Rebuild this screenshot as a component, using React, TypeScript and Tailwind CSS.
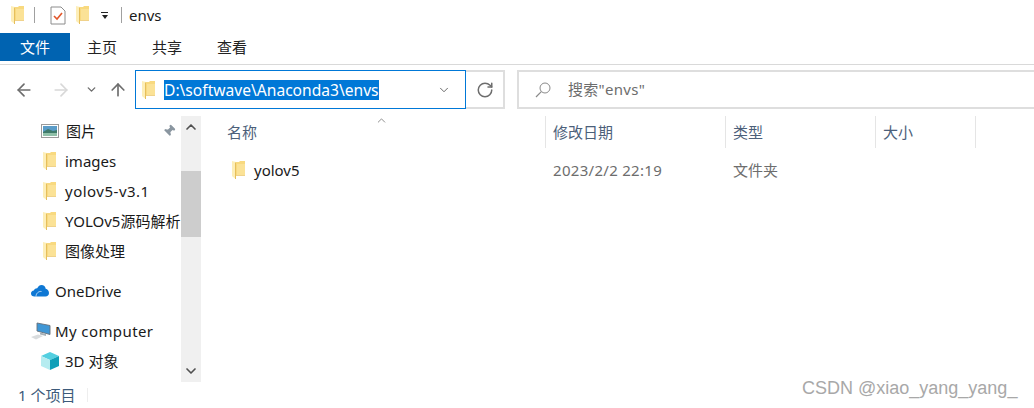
import React from 'react'
import { ArrowLeft, ArrowRight, ArrowUp, ChevronDown, ChevronUp, RotateCw, Pin } from 'lucide-react'

const font = 'font-["Noto_Sans","Noto_Sans_CJK_SC",sans-serif]'

function Folder({ className = '' }: { className?: string }) {
  return (
    <svg width="13" height="18" viewBox="0 0 13 18" className={`shrink-0 ${className}`}>
      <path d="M4 1h3l1-1h5v14H4z" fill="#f8d97f" />
      <path d="M5 3h8v11H5z" fill="#fbe296" />
      <path d="M0 0l4 1v17l-3-2-1-1z" fill="#fdeeb8" />
      <path d="M3 1.500h1V18H3z" fill="#e6bf5c" />
      <path d="M4 14h9v.8H4z" fill="#ecc76e" />
    </svg>
  )
}

function NavRow({ label, indent = 'pl-[43px]', gap = 'gap-[9px]', icon, h = 'h-[30px]', right, labelClass = '' }: {
  label: string
  indent?: string
  gap?: string
  icon: React.ReactNode
  h?: string
  right?: React.ReactNode
  labelClass?: string
}) {
  return (
    <div className={`${h} flex items-center ${indent} ${gap} relative overflow-hidden whitespace-nowrap text-[15px] text-[#1a1a1a]`}>
      {icon}
      <span className={labelClass}>{label}</span>
      {right}
    </div>
  )
}

function PicturesIcon() {
  return (
    <svg width="18" height="14" viewBox="0 0 18 14" className="shrink-0 -ml-[2px] mr-[-2px]">
      <rect x="0.5" y="0.5" width="17" height="13" fill="#fff" stroke="#9a9a9a" />
      <rect x="2" y="2" width="14" height="6" fill="#5a9cc8" />
      <rect x="2" y="8" width="14" height="4" fill="#8fc0a8" />
      <path d="M2 8 7 5l5 2 4-1v3H2z" fill="#3f7a6a" />
    </svg>
  )
}

function CloudIcon() {
  return (
    <svg width="18" height="12" viewBox="0 0 18 12" className="shrink-0">
      <path d="M3.500 11.500C1.300 11.500 0 10.200 0 8.500 0 6.900 1.200 5.700 2.800 5.600 3.500 3.800 5 3.200 6.200 3.300 7.200 1.200 8.800 0 10.500 0c2.200 0 4 1.600 4.200 3.800C16.600 4.200 18 6 18 8s-1.500 3.500-3.500 3.500z" fill="#0f78d4" />
      <path d="M5 11.500c0-3 2.500-5.500 5.500-5" fill="none" stroke="#fff" strokeWidth="0.700" />
    </svg>
  )
}

function ComputerIcon() {
  return (
    <svg width="20" height="18" viewBox="0 0 20 18" className="shrink-0">
      <path d="M6 1l13 2.500v9L6 9z" fill="#3f97d6" stroke="#66717a" strokeWidth="0.900" />
      <path d="M9 10.500l6 1.500v2l-6-1.500z" fill="#a7b1b8" />
      <path d="M0 15l7-2.500 5 1.500-7 3.500z" fill="#d9dcde" />
    </svg>
  )
}

function CubeIcon() {
  return (
    <svg width="18" height="18" viewBox="0 0 18 18" className="shrink-0">
      <path d="M9 0l9 4-9 4-9-4z" fill="#53cfe0" />
      <path d="M0 4l9 4v10l-9-4z" fill="#b5ecf0" />
      <path d="M18 4 9 8v10l9-4z" fill="#0f9fb8" />
    </svg>
  )
}

function MagnifierIcon() {
  return (
    <svg width="16" height="16" viewBox="0 0 16 16" className="shrink-0">
      <circle cx="10" cy="6" r="5" fill="none" stroke="#8a8a8a" strokeWidth="1" />
      <path d="M6.300 9.700 1 15" stroke="#8a8a8a" strokeWidth="1.200" />
    </svg>
  )
}

export default function App() {
  return (
    <div className={`relative w-[1034px] h-[408px] overflow-hidden bg-white flex flex-col ${font}`}>
      {/* title bar */}
      <div className="h-[33px] flex items-center pl-[11px] pb-[3px] shrink-0">
        <Folder />
        <div className="w-px h-[16px] bg-[#a0a0a0] ml-[10px]" />
        <svg width="16" height="19" viewBox="0 0 16 19" className="ml-[15px]">
          <path d="M1 1h10l4 4v13H1z" fill="#fff" stroke="#8c8c8c" />
          <path d="M4 10l3 3 5-6" fill="none" stroke="#e2572b" strokeWidth="1.600" />
        </svg>
        <Folder className="ml-[10px]" />
        <div className="ml-[12px] flex flex-col items-center gap-[2px]">
          <div className="w-[7px] h-px bg-[#222]" />
          <div className="w-0 h-0 border-x-[3.500px] border-x-transparent border-t-[4px] border-t-[#222]" />
        </div>
        <div className="w-px h-[16px] bg-[#a0a0a0] ml-[13px]" />
        <span className="ml-[7px] text-[15px] text-[#1a1a1a]">envs</span>
      </div>

      {/* ribbon tabs */}
      <div className="h-[28px] flex items-center shrink-0 text-[15px] text-[#222]">
        <div className="w-[70px] h-full bg-[#0063b1] text-white flex items-center justify-center">文件</div>
        <span className="ml-[17px]">主页</span>
        <span className="ml-[35px]">共享</span>
        <span className="ml-[35px]">查看</span>
      </div>
      <div className="h-[3px] shrink-0" />
      <div className="h-px bg-[#d9d9d9] shrink-0" />

      {/* address row */}
      <div className="h-[39px] mt-[5px] flex items-stretch shrink-0">
        <div className="w-[135px] flex items-center pl-[14px] text-[#6d6d6d]">
          <ArrowLeft size={20} strokeWidth={2} />
          <ArrowRight size={20} strokeWidth={2} className="ml-[17px] text-[#d8d8d8]" />
          <ChevronDown size={13} strokeWidth={2.500} className="ml-[14px]" />
          <ArrowUp size={20} strokeWidth={2} className="ml-[10px]" />
        </div>
        <div className="w-[331px] border border-[#0078d7] flex items-center pl-[6px] pr-[14px]">
          <Folder />
          <span className="ml-[9px] bg-[#0078d7] text-white text-[15.600px] leading-[20px] whitespace-nowrap">D:\softwave\Anaconda3\envs</span>
          <ChevronDown size={14} strokeWidth={1.500} className="ml-auto text-[#555]" />
        </div>
        <div className="w-[39px] border-y-2 border-r-2 border-[#dedede] flex items-center justify-center">
          <RotateCw size={18} strokeWidth={2} className="text-[#6d6d6d]" />
        </div>
        <div className="ml-[12px] flex-1 border-2 border-r-0 border-[#dedede] flex items-center pl-[16px]">
          <MagnifierIcon />
          <span className="ml-[17px] text-[15px] tracking-[0.300px] text-[#6d6d6d]">搜索"envs"</span>
        </div>
      </div>

      {/* main */}
      <div className="flex-1 min-h-0 flex pt-[7px]">
        <div className="w-[181px] shrink-0 overflow-hidden">
          <NavRow
            label="图片"
            icon={<PicturesIcon />}
            right={<Pin size={14} strokeWidth={0} fill="#8a96a0" className="absolute left-[162px] top-[8px] rotate-45" />}
          />
          <NavRow label="images" icon={<Folder />} gap="gap-[9px]" />
          <NavRow label="yolov5-v3.1" icon={<Folder />} labelClass="tracking-[0.500px]" />
          <NavRow label="YOLOv5源码解析" icon={<Folder />} />
          <NavRow label="图像处理" icon={<Folder />} />
          <div className="h-[10px]" />
          <NavRow label="OneDrive" indent="pl-[31px]" gap="gap-[6px]" icon={<CloudIcon />} />
          <div className="h-[10px]" />
          <NavRow label="My computer" indent="pl-[31px]" gap="gap-[4px]" icon={<ComputerIcon />} labelClass="tracking-[0.400px]" />
          <NavRow label="3D 对象" indent="pl-[41px]" gap="gap-[6px]" icon={<CubeIcon />} />
        </div>

        <div className="w-[20px] h-[266px] shrink-0 bg-[#f0f0f0] flex flex-col">
          <div className="h-[55px] flex justify-center pt-[3px]">
            <ChevronUp size={16} strokeWidth={2.500} className="text-[#505050]" />
          </div>
          <div className="h-[66px] bg-[#cdcdcd]" />
          <div className="flex-1 flex items-end justify-center pb-[3px]">
            <ChevronDown size={16} strokeWidth={2.500} className="text-[#505050]" />
          </div>
        </div>

        <div className="flex-1 min-w-0 relative">
          <div className="h-[32px] flex items-stretch text-[15px] text-[#4c607a]">
            <div className="w-[345px] border-r border-[#e5e5e5] flex items-center pl-[26px]">名称</div>
            <div className="w-[180px] border-r border-[#e5e5e5] flex items-center pl-[7px]">修改日期</div>
            <div className="w-[150px] border-r border-[#e5e5e5] flex items-center pl-[7px]">类型</div>
            <div className="w-[100px] border-r border-[#e5e5e5] flex items-center pl-[7px]">大小</div>
          </div>
          <ChevronUp size={13} strokeWidth={1.200} className="absolute left-[174px] -top-[2px] text-[#555]" />
          <div className="h-[44px] flex items-center text-[15px] text-[#6d6d6d]">
            <div className="w-[345px] flex items-center pl-[31px] gap-[9px] text-[#1a1a1a]">
              <Folder />
              <span>yolov5</span>
            </div>
            <div className="w-[180px] pl-[7px] tracking-[0.300px]">2023/2/2 22:19</div>
            <div className="w-[150px] pl-[7px]">文件夹</div>
          </div>
        </div>
      </div>

      {/* status bar */}
      <div className="h-[26px] shrink-0 flex items-center pl-[18px] text-[15px] text-[#3c5a7a]">
        <span className="w-[69px]">1 个项目</span>
        <div className="w-px h-[14px] bg-[#eeeeee]" />
      </div>

      {/* image watermark */}
      <span className='absolute left-[802px] top-[377px] text-[18px] leading-[22px] text-[#a8a8a8] font-["Liberation_Sans",sans-serif]'>CSDN @xiao_yang_yang_</span>
    </div>
  )
}
